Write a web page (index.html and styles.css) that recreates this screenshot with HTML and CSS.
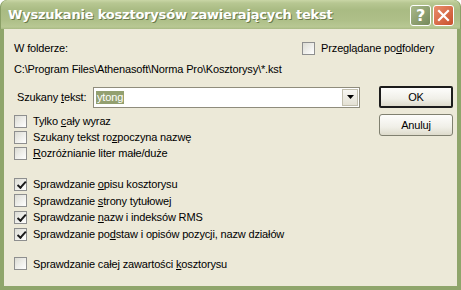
FILE: index.html
```html
<!DOCTYPE html>
<html lang="pl">
<head>
<meta charset="utf-8">
<link rel="stylesheet" href="styles.css">
</head>
<body>
<div class="window">
  <div class="titlebar">
    <span class="title">Wyszukanie kosztorysów zawierających tekst</span>
    <div class="tbuttons">
      <div class="tbtn help">?</div>
      <div class="tbtn close">
        <svg width="13" height="13" viewBox="0 0 13 13"><path d="M2 2 L11 11 M11 2 L2 11" stroke="#fff" stroke-width="2.2" stroke-linecap="square"/></svg>
      </div>
    </div>
  </div>
  <div class="body">
    <div class="row1">
      <span>W folderze:</span>
      <label class="chk sub"><span class="box"></span><span>Przeglądane po<u>d</u>foldery</span></label>
    </div>
    <div class="path">C:\Program Files\Athenasoft\Norma Pro\Kosztorysy\*.kst</div>
    <div class="main">
      <div class="left">
        <div class="search">
          <span class="lbl">Szukany <u>t</u>ekst:</span>
          <div class="combo">
            <span class="sel">ytong</span>
            <div class="drop"><svg width="7" height="4" viewBox="0 0 7 4"><path d="M0 0 H7 L3.5 4 Z" fill="#000"/></svg></div>
          </div>
        </div>
        <div class="group g1">
          <label class="chk"><span class="box"></span><span>Tylko <u>c</u>ały wyraz</span></label>
          <label class="chk"><span class="box"></span><span>Szukany tekst ro<u>z</u>poczyna nazwę</span></label>
          <label class="chk"><span class="box"></span><span><u>R</u>ozróżnianie liter małe/duże</span></label>
        </div>
        <div class="group g2">
          <label class="chk"><span class="box on"></span><span>Sprawdzanie <u>o</u>pisu kosztorysu</span></label>
          <label class="chk"><span class="box"></span><span>Sprawdzanie <u>s</u>trony tytułowej</span></label>
          <label class="chk"><span class="box on"></span><span>Sprawdzanie <u>n</u>azw i indeksów RMS</span></label>
          <label class="chk"><span class="box on"></span><span>Sprawdzanie po<u>d</u>staw i opisów pozycji, nazw działów</span></label>
        </div>
        <div class="group g3">
          <label class="chk"><span class="box"></span><span>Sprawdzanie całej zawartości <u>k</u>osztorysu</span></label>
        </div>
      </div>
      <div class="right">
        <div class="btn default">OK</div>
        <div class="btn">Anuluj</div>
      </div>
    </div>
  </div>
</div>
</body>
</html>
```

FILE: styles.css
```css
* { box-sizing: border-box; }
html, body { margin: 0; padding: 0; }
body {
  width: 461px; height: 290px; overflow: hidden;
  font-family: "Liberation Sans", Arial, sans-serif;
  font-size: 11px; color: #000; background: #fff;
  letter-spacing: -0.15px;
}
.window {
  width: 461px; height: 290px;
  display: flex; flex-direction: column;
  background: #8fa56b;
  border-radius: 7px 7px 0 0;
  overflow: hidden;
}
.titlebar {
  height: 29px; flex: none;
  display: flex; align-items: center; justify-content: space-between;
  padding: 0 6px 0 7px;
  background: linear-gradient(#c9d6a6 0px, #b7c792 3px, #a9bb83 10px, #aebf88 20px, #b8c893 27px, #a7b982 29px);
  border-left: 1px solid #8a9f66; border-right: 1px solid #8a9f66;
  border-radius: 7px 7px 0 0;
}
.title {
  color: #fff; font-weight: bold; font-size: 13px;
  font-family: "DejaVu Sans", sans-serif;
  letter-spacing: -0.2px;
  text-shadow: 1px 1px 0 #6a7a4a;
}
.tbuttons { display: flex; gap: 2px; margin-top: 1px; }
.tbtn {
  width: 21px; height: 21px; border: 1px solid #fff; border-radius: 3px;
  display: flex; align-items: center; justify-content: center;
}
.help {
  background: linear-gradient(135deg, #a9b98a, #76895a);
  color: #fff; font-weight: bold; font-size: 16px;
  font-family: "DejaVu Sans", sans-serif;
}
.close { background: linear-gradient(135deg, #e98e6c, #c9502c); }
.body {
  flex: 1; margin: 0 4px 4px 4px;
  background: #ece9d8;
  padding: 11px 0 0 10px;
}
.row1 {
  height: 16px; display: flex; align-items: center; justify-content: space-between;
  padding-right: 23px;
}
.path { height: 16px; line-height: 16px; margin-top: 5px; }
.main { display: flex; margin-top: 9px; }
.left { width: 352px; }
.right { margin-left: 13px; display: flex; flex-direction: column; gap: 6px; }
.search { height: 22px; display: flex; align-items: center; }
.lbl { margin-left: 3px; width: 76px; }
.combo {
  width: 267px; height: 21px; background: #fff;
  border: 1px solid #8f8c7c;
  display: flex; align-items: center; justify-content: space-between;
  padding: 0 1px 0 2px;
}
.sel { background: #93a070; color: #fff; line-height: 13px; padding: 0 1px; }
.drop {
  width: 16px; height: 17px; background: linear-gradient(#f7f6f2, #e4e1d4);
  border: 1px solid #c2bfae;
  display: flex; align-items: center; justify-content: center;
}
.group { display: flex; flex-direction: column; }
.g1 { margin-top: 5px; }
.g2 { margin-top: 15px; }
.g3 { margin-top: 13px; }
.chk { display: flex; align-items: center; height: 16.6px; }
.g1 .chk { height: 16px; }
.box {
  width: 13px; height: 13px; flex: none;
  border: 1px solid #8e8f8f;
  background: linear-gradient(135deg, #dcdcd4, #fff);
  margin-right: 6px; position: relative;
}
.box.on::after {
  content: ""; position: absolute; left: 2px; top: 3px;
  width: 7px; height: 3px;
  border-left: 2px solid #1a1a1a; border-bottom: 2px solid #1a1a1a;
  transform: rotate(-48deg); transform-origin: 4px 2px;
}
.btn {
  width: 74px; height: 22px;
  border: 1px solid #808070; border-radius: 3px;
  background: linear-gradient(#fdfdfb, #f0efe8 60%, #dedbcc);
  display: flex; align-items: center; justify-content: center;
}
.btn.default { border: 2px solid #1c1c1c; border-radius: 2px; }
u { text-decoration: underline; text-underline-offset: 1px; }
```
